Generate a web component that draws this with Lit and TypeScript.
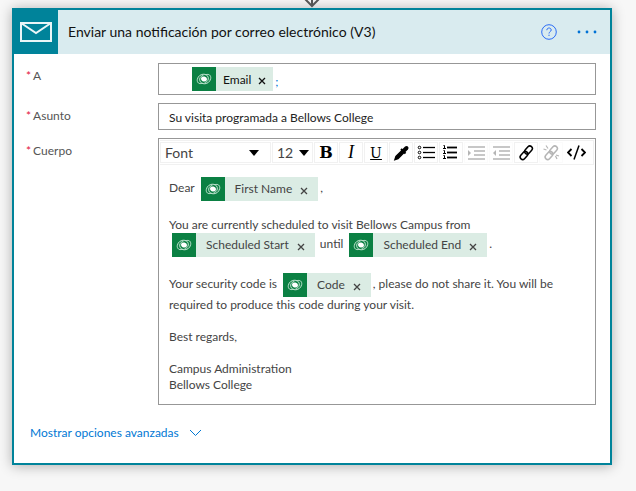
import { LitElement, html, css, svg } from "lit";
import { customElement, property } from "lit/decorators.js";

@customElement("dynamic-token")
class DynamicToken extends LitElement {
  @property() label = "";
  @property({ type: Boolean, reflect: true }) compact = false;

  static styles = css`
    :host {
      display: inline-flex;
      vertical-align: -9px;
      height: 24px;
      margin: 0 2px 0 3px;
      background: #dbece4;
      color: #444;
      line-height: 24px;
      white-space: nowrap;
    }
    :host([compact]) {
      margin: 0;
      color: #111;
    }
    .source {
      width: 24px;
      height: 24px;
      background: #0b8043;
    }
    .name {
      padding-left: 10px;
      font-size: 12px;
    }
    .remove {
      display: flex;
      align-items: center;
      border: 0;
      padding: 3px 10px 0 8px;
      background: none;
      color: inherit;
    }
    :host([compact]) .name {
      padding: 1px 0 0 7px;
    }
    :host([compact]) .remove {
      padding: 3px 7px 0 7px;
    }
  `;

  render() {
    return html`
      <svg class="source" viewBox="0 0 24 24" fill="none" stroke="#c4e6d3" stroke-width="1">
        <path d="M10.500 16.200C7 17.500 4.800 15.500 5.300 12.500C5.900 9 9 7 12 7.200C15 7.400 16.600 9.500 16.300 12C16 14 14.500 15.400 12.700 15.400" />
        <path d="M13.500 7.800C17 6.500 19.200 8.500 18.700 11.500C18.100 15 15 17 12 16.800C9 16.600 7.400 14.500 7.700 12C8 10 9.500 8.600 11.300 8.600" />
        <path d="M9.600 10.200C11 9 13.500 9.300 14.600 11C15.200 12.200 15 13.300 14.400 13.800C13 15 10.500 14.700 9.400 13C8.800 11.800 9 10.700 9.600 10.200Z" fill="#fff" stroke="none" />
      </svg>
      <span class="name">${this.label}</span>
      <button class="remove" aria-label="Quitar ${this.label}">
        <svg width="8" height="8" viewBox="0 0 8 8" stroke="currentColor" stroke-width="1.300">
          <path d="M1 1L7 7M7 1L1 7" />
        </svg>
      </button>
    `;
  }
}

const list = (ordered: boolean) => svg`
  ${[3, 8, 13].map(
    (y) => svg`
      ${
        ordered
          ? svg`<path d="M1.500 ${y - 1.5}H2.500V${y + 2}M1 ${y + 1.5}H4" stroke-width="1" />`
          : svg`<circle cx="2.500" cy=${y + 0.5} r="1.300" stroke-width="1" />`
      }
      <path d="M${ordered ? 5 : 6} ${y + 0.5}H${ordered ? 15 : 18}" stroke-width=${ordered ? 1.8 : 1.3} />`
  )}`;

const indent = (inward: boolean) => svg`
  <path d="M1 3H18M7 7H18M7 11H18M1 15H18" stroke-width="1.500" />
  <path d=${inward ? "M1 6L4 9L1 12Z" : "M4 6L1 9L4 12Z"} fill="currentColor" stroke="none" />`;

const chain = svg`
  <rect x="-2.500" y="-4.500" width="5" height="9" rx="2.500" transform="translate(11.500 6) rotate(42)" />
  <rect x="-2.500" y="-4.500" width="5" height="9" rx="2.500" transform="translate(7 11.500) rotate(42)" />`;

const tools = [
  { name: "Negrita", glyph: "B", cls: "bold" },
  { name: "Cursiva", glyph: "I", cls: "italic" },
  { name: "Subrayado", glyph: "U", cls: "under" },
  {
    name: "Color",
    icon: svg`<path d="M3 15.500L4 12.500L10 6.500L12 8.500L6 14.500Z" fill="currentColor" />
      <path d="M9 5L13.500 9.500" stroke-width="2" />
      <path d="M11.500 7L14.500 4" stroke-width="4" stroke-linecap="round" />`,
  },
  { name: "Lista con viñetas", icon: list(false) },
  { name: "Lista numerada", icon: list(true) },
  { name: "Aumentar sangría", icon: indent(true), off: true },
  { name: "Reducir sangría", icon: indent(false), off: true },
  { name: "Vínculo", icon: chain },
  {
    name: "Quitar vínculo",
    icon: svg`${chain}<path d="M4 1.500L6 4.500M1.500 5L4.500 6M13.500 12L15 15M14 11L17 12" stroke-width="1.200" />`,
    off: true,
  },
  {
    name: "Vista de código",
    icon: svg`<path d="M4.500 5L1 8.500L4.500 12M14.500 5L18 8.500L14.500 12" stroke-width="1.800" /><path d="M12 1.500L7 15.500" />`,
    cls: "plain",
  },
];

@customElement("app-root")
class AppRoot extends LitElement {
  static styles = css`
    :host {
      display: block;
      box-sizing: border-box;
      min-height: 100vh;
      padding: 0 24px 24px 12px;
      background: #f7f7f7;
      color: #444;
      font: 12px/16px Lato, "Open Sans", sans-serif;
    }
    * {
      box-sizing: border-box;
    }
    button,
    input,
    select {
      font: inherit;
      color: inherit;
      margin: 0;
    }
    .connector {
      display: flex;
      justify-content: center;
      height: 8px;
    }
    .card {
      border: 2px solid #00839a;
      background: #fff;
      box-shadow: 0 1px 12px rgba(0, 0, 0, 0.3);
    }
    .head {
      display: flex;
      align-items: center;
      height: 44px;
      padding-right: 12px;
      background: #d9ebef;
    }
    .mail {
      display: flex;
      align-items: center;
      justify-content: center;
      width: 44px;
      height: 44px;
      background: #00839a;
    }
    h1 {
      flex: 1;
      margin: 0 0 0 10px;
      color: #111;
      font-size: 14px;
      font-weight: 400;
    }
    .head button {
      display: flex;
      border: 0;
      padding: 0;
      background: none;
    }
    .head .help {
      margin-right: 20px;
    }
    .form {
      display: grid;
      grid-template-columns: 132px minmax(0, 1fr);
      row-gap: 8px;
      padding: 9px 14px 0 12px;
    }
    .label {
      padding-top: 5px;
      color: #555;
    }
    .label::before {
      content: "*";
      margin-right: 2px;
      color: #e3123c;
    }
    .box {
      border: 1px solid #979797;
      background: #fff;
    }
    .to {
      display: flex;
      align-items: center;
      height: 32px;
      padding-left: 33px;
      color: #0078d4;
    }
    .to input {
      flex: 1;
      min-width: 0;
      border: 0;
      padding: 6px 2px 0;
      background: none;
      outline: 0;
    }
    .subject {
      width: 100%;
      height: 27px;
      border-radius: 0;
      padding: 2px 10px 0;
      color: #222;
    }
    .tools {
      display: flex;
      gap: 1px;
      height: 25px;
      margin: 1px 1px 0;
      border: 1px solid #f1f1f1;
      border-left: 0;
      padding: 1px 0;
    }
    .pick {
      position: relative;
      display: flex;
      border: 1px solid #f1f1f1;
    }
    .pick select {
      width: 100%;
      appearance: none;
      border: 0;
      padding: 0 0 0 4px;
      background: none;
      font-size: 14px;
    }
    .pick svg {
      position: absolute;
      right: 11px;
      top: 6px;
      pointer-events: none;
    }
    .family {
      flex: 0 1 111px;
    }
    .size {
      flex: 0 0 41px;
    }
    .size svg {
      right: 3px;
    }
    .tool {
      display: flex;
      align-items: center;
      justify-content: center;
      flex: 0 0 24px;
      border: 1px solid #f1f1f1;
      padding: 0;
      background: none;
      color: #000;
    }
    .tool:disabled {
      border-color: #fbfbfb;
      color: #b5b5b5;
    }
    .plain {
      border-color: transparent;
    }
    .bold {
      font: 700 16px "DejaVu Serif", serif;
    }
    .italic {
      font: italic 18px "Liberation Serif", serif;
    }
    .under {
      font: 14px "DejaVu Serif", serif;
      text-decoration: underline;
    }
    .message {
      padding: 12px 10px 11px;
      outline: 0;
    }
    .message p {
      margin: 0 0 16px;
    }
    .message p:last-child {
      margin: 0;
    }
    .more {
      display: flex;
      align-items: center;
      gap: 10px;
      padding: 20px 16px 22px;
      color: #0078d4;
      text-decoration: none;
    }
  `;

  render() {
    const caret = html`<svg width="10" height="8" viewBox="0 0 10 8"><path d="M0 1H10L5 7Z" /></svg>`;
    return html`
      <div class="connector">
        <svg width="16" height="8" viewBox="0 0 16 8" fill="none" stroke="#555" stroke-width="2">
          <path d="M8 0V6M1 -1L8 6L15 -1" />
        </svg>
      </div>
      <section class="card">
        <header class="head">
          <div class="mail">
            <svg width="34" height="22" viewBox="0 0 34 22" fill="none" stroke="#eaf6f8" stroke-width="2">
              <path d="M2 2H32V20H2ZM2 2L17 12L32 2" />
            </svg>
          </div>
          <h1>Enviar una notificación por correo electrónico (V3)</h1>
          <button class="help" aria-label="Ayuda">
            <svg width="16" height="16" viewBox="0 0 16 16" fill="none" stroke="#2b6cf6">
              <circle cx="8" cy="8" r="7.300" />
              <path d="M5.800 6.200C5.800 3.300 10.200 3.300 10.200 6C10.200 7.700 8 7.700 8 9.500M8 10.700V12" />
            </svg>
          </button>
          <button aria-label="Más">
            <svg width="21" height="4" viewBox="0 0 21 4" fill="#0072d6">
              <circle cx="2" cy="2" r="1.400" />
              <circle cx="10" cy="2" r="1.400" />
              <circle cx="18" cy="2" r="1.400" />
            </svg>
          </button>
        </header>
        <div class="form">
          <label class="label" for="to">A</label>
          <div class="box to">
            <dynamic-token compact label="Email"></dynamic-token>
            <input id="to" value=";" />
          </div>
          <label class="label" for="subject">Asunto</label>
          <input id="subject" class="box subject" value="Su visita programada a Bellows College" />
          <span class="label" id="body-label">Cuerpo</span>
          <div class="box">
            <div class="tools" role="toolbar">
              <div class="pick family">
                <select aria-label="Fuente"><option>Font</option></select>${caret}
              </div>
              <div class="pick size">
                <select aria-label="Tamaño"><option>12</option></select>${caret}
              </div>
              ${tools.map(
                (t) => html`<button class="tool ${t.cls ?? ""}" aria-label=${t.name} ?disabled=${t.off}>
                  ${
                    t.glyph ??
                    html`<svg width="19" height="18" viewBox="0 0 19 18" fill="none" stroke="currentColor" stroke-width="1.500">${t.icon}</svg>`
                  }
                </button>`
              )}
            </div>
            <div class="message" contenteditable="true" spellcheck="false" role="textbox" aria-labelledby="body-label">
              <p>Dear <dynamic-token label="First Name"></dynamic-token>,</p>
              <p>
                You are currently scheduled to visit Bellows Campus from
                <dynamic-token label="Scheduled Start"></dynamic-token> until
                <dynamic-token label="Scheduled End"></dynamic-token>.
              </p>
              <p>
                Your security code is <dynamic-token label="Code"></dynamic-token>, please do not share it. You will be
                required to produce this code during your visit.
              </p>
              <p>Best regards,</p>
              <p>Campus Administration<br />Bellows College</p>
            </div>
          </div>
        </div>
        <a class="more" href="#">
          Mostrar opciones avanzadas
          <svg width="13" height="8" viewBox="0 0 13 8" fill="none" stroke="currentColor"><path d="M1 1L6.500 6.500L12 1" /></svg>
        </a>
      </section>
    `;
  }
}
